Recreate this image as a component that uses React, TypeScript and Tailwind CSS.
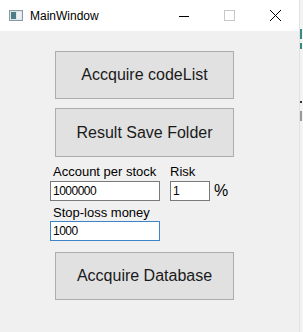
export default function App() {
  return (
    <div className="w-[303px] h-[332px] bg-[#f0f0f0] flex overflow-hidden" style={{ fontFamily: '"Liberation Sans", Arial, sans-serif' }}>
      <div className="w-[299px] flex flex-col shrink-0">
        <div className="h-[31px] bg-white flex items-center text-black">
          <div className="ml-[9px] w-[14px] h-[11px] border border-[#8a9aa6] bg-[#dfe6ea] flex gap-[1px] p-[1px]">
            <div className="w-[5px] bg-[#4f7d86]" />
            <div className="flex-1 bg-[#eef2f4]" />
          </div>
          <span className="ml-[7px] text-[12px]">MainWindow</span>
          <svg className="ml-[79px]" width="12" height="12" viewBox="0 0 12 12">
            <path d="M1 6.5h10" stroke="#000" strokeWidth="1" />
          </svg>
          <svg className="ml-[34px]" width="11" height="11" viewBox="0 0 11 11">
            <rect x="0.5" y="0.5" width="10" height="10" fill="none" stroke="#c8c8c8" />
          </svg>
          <svg className="ml-[34px]" width="13" height="13" viewBox="0 0 13 13">
            <path d="M1 1L12 12M12 1L1 12" stroke="#000" strokeWidth="1" />
          </svg>
        </div>
        <div className="flex flex-col pl-[50px] pt-[20px]">
          <button className="ml-[5px] w-[179px] h-[48px] bg-[#e1e1e1] border border-[#adadad] text-[16px] text-[#1a1a1a]">
            Accquire codeList
          </button>
          <button className="ml-[5px] mt-[9px] w-[179px] h-[49px] bg-[#e1e1e1] border border-[#adadad] text-[16px] text-[#1a1a1a]">
            Result Save Folder
          </button>
          <div className="flex mt-[7px]">
            <div className="flex flex-col">
              <span className="ml-[3px] text-[13px] leading-[16px] h-[17px] text-black">Account per stock</span>
              <div className="w-[110px] h-[20px] bg-white border border-[#7a7a7a] text-[12px] leading-[18px] px-[2px] tracking-[-0.5px] text-black">1000000</div>
            </div>
            <div className="flex flex-col ml-[10px]">
              <span className="text-[13px] leading-[16px] h-[17px] text-black">Risk</span>
              <div className="flex items-center h-[20px]">
                <div className="w-[40px] h-[20px] bg-white border border-[#7a7a7a] text-[12px] leading-[18px] px-[2px] text-black">1</div>
                <span className="ml-[4px] text-[16px] leading-[20px] text-black">%</span>
              </div>
            </div>
          </div>
          <span className="ml-[3px] mt-[4px] text-[13px] leading-[16px] h-[16px] text-black">Stop-loss money</span>
          <div className="w-[110px] h-[20px] bg-white border border-[#3c86c8] text-[12px] leading-[18px] px-[2px] tracking-[-0.5px] text-black">1000</div>
          <button className="ml-[5px] mt-[11px] w-[179px] h-[48px] bg-[#e1e1e1] border border-[#adadad] text-[16px] text-[#1a1a1a]">
            Accquire Database
          </button>
        </div>
      </div>
      <div className="flex-1 bg-[#f3f3f3] border-l border-[#e2e2e2] flex flex-col">
        <div className="h-[10px] mt-[29px] w-[2px] bg-[#3a8a8a]" />
        <div className="h-[6px] mt-[4px] w-[2px] bg-[#3a8a8a]" />
        <div className="h-[2px] mt-[52px] w-[2px] bg-[#333]" />
        <div className="h-[10px] mt-[8px] w-[2px] bg-[#999]" />
      </div>
    </div>
  );
}
